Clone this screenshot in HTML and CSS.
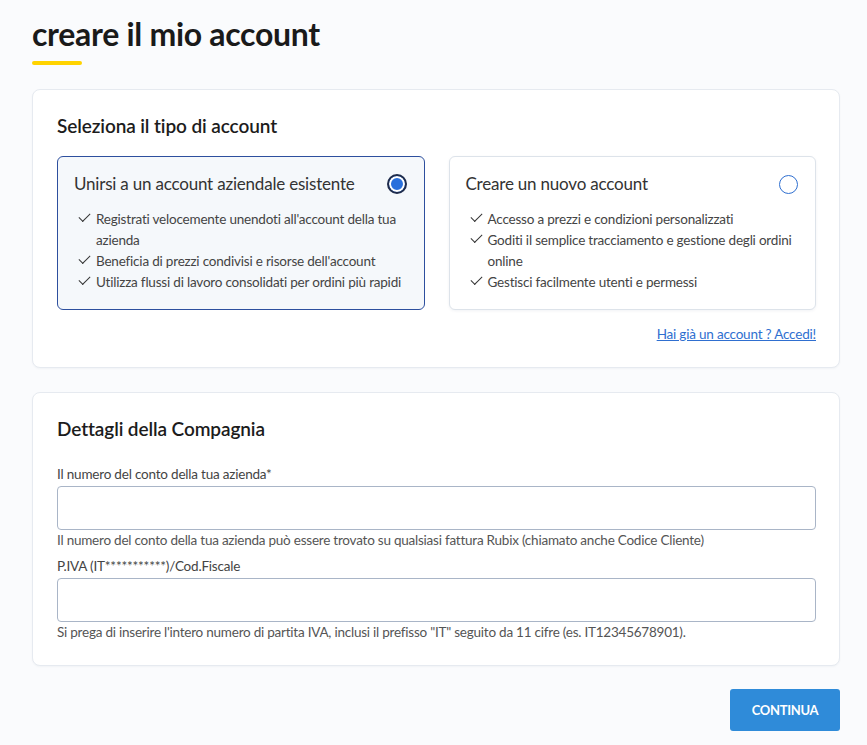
FILE: index.html
```html
<!DOCTYPE html>
<html>
<head>
    <title>Creare il mio account</title>
    <link rel="stylesheet" href="styles.css">
</head>
<body>
    <div class="page">
        <h1 class="page-title">creare il mio account</h1>
        <div class="title-bar"></div>

        <section class="card">
            <h2 class="card-title">Seleziona il tipo di account</h2>
            <div class="options">
                <label class="option option-selected">
                    <div class="option-head">
                        <span class="option-title">Unirsi a un account aziendale esistente</span>
                        <span class="radio radio-on"></span>
                    </div>
                    <ul class="checks">
                        <li>Registrati velocemente unendoti all'account della tua azienda</li>
                        <li>Beneficia di prezzi condivisi e risorse dell'account</li>
                        <li>Utilizza flussi di lavoro consolidati per ordini più rapidi</li>
                    </ul>
                </label>
                <label class="option">
                    <div class="option-head">
                        <span class="option-title">Creare un nuovo account</span>
                        <span class="radio"></span>
                    </div>
                    <ul class="checks">
                        <li>Accesso a prezzi e condizioni personalizzati</li>
                        <li>Goditi il semplice tracciamento e gestione degli ordini online</li>
                        <li>Gestisci facilmente utenti e permessi</li>
                    </ul>
                </label>
            </div>
            <div class="login-row">
                <a href="#" class="login-link">Hai già un account ? Accedi!</a>
            </div>
        </section>

        <section class="card card-details">
            <h2 class="card-title">Dettagli della Compagnia</h2>
            <div class="field">
                <label for="accountNumber">Il numero del conto della tua azienda*</label>
                <input type="text" id="accountNumber" name="accountNumber">
                <p class="hint">Il numero del conto della tua azienda può essere trovato su qualsiasi fattura Rubix (chiamato anche Codice Cliente)</p>
            </div>
            <div class="field">
                <label for="vat">P.IVA (IT***********)/Cod.Fiscale</label>
                <input type="text" id="vat" name="vat">
                <p class="hint">Si prega di inserire l'intero numero di partita IVA, inclusi il prefisso "IT" seguito da 11 cifre (es. IT12345678901).</p>
            </div>
        </section>

        <div class="actions">
            <button type="button" class="btn-continue">CONTINUA</button>
        </div>
    </div>
</body>
</html>
```

FILE: styles.css
```css
body {
    margin: 0;
    padding: 0;
    background: #fafbfd;
    font-family: Lato, "Open Sans", sans-serif;
    color: #333;
}

.page {
    width: 808px;
    margin-left: 32px;
    padding-top: 14px;
}

.page-title {
    margin: 0;
    font-size: 32px;
    line-height: 40px;
    font-weight: 700;
    color: #1a1a1a;
    letter-spacing: -0.3px;
}

.title-bar {
    width: 50px;
    height: 4px;
    margin-top: 7px;
    background: #ffd300;
    border-radius: 2px;
}

.card {
    margin-top: 24px;
    background: #fff;
    border: 1px solid #e6eaf0;
    border-radius: 8px;
    padding: 22px 23px 23px 24px;
    box-shadow: 0 1px 2px rgba(20, 40, 80, 0.04);
}

.card-title {
    margin: 0;
    font-size: 19px;
    line-height: 28px;
    font-weight: 600;
    color: #1c1c1c;
    letter-spacing: -0.1px;
}

.options {
    display: grid;
    grid-template-columns: 1fr 1fr;
    gap: 24px;
    margin-top: 16px;
}

.option {
    display: block;
    border: 1px solid #dde3ea;
    border-radius: 6px;
    background: #fff;
    padding: 15px 16px 16px 16px;
    box-shadow: 0 1px 3px rgba(20, 40, 80, 0.06);
    cursor: pointer;
}

.option-selected {
    border-color: #2d4f9e;
    background: #f5f8fb;
    box-shadow: none;
}

.option-head {
    display: flex;
    justify-content: space-between;
    align-items: center;
    height: 24px;
}

.option-title {
    font-size: 17px;
    line-height: 24px;
    color: #333;
    letter-spacing: -0.2px;
}

.radio {
    width: 17px;
    height: 17px;
    border: 1.5px solid #2f6fd0;
    border-radius: 50%;
    margin-right: 1px;
    box-sizing: content-box;
}

.radio-on {
    border: 2px solid #1f2c4c;
    width: 16px;
    height: 16px;
    background: #2a70dc;
    box-shadow: inset 0 0 0 2px #fff;
}

.checks {
    list-style: none;
    margin: 13px 0 0 0;
    padding: 0;
}

.checks li {
    position: relative;
    padding-left: 22px;
    font-size: 13.5px;
    line-height: 21px;
    color: #444;
    letter-spacing: -0.2px;
}

.checks li::before {
    content: "";
    position: absolute;
    left: 5px;
    top: 4px;
    width: 10px;
    height: 5px;
    border-left: 1.4px solid #333;
    border-bottom: 1.4px solid #333;
    transform: rotate(-45deg);
}

.login-row {
    text-align: right;
    margin-top: 13px;
    line-height: 20px;
}

.login-link {
    font-size: 13.5px;
    color: #2f6fd0;
    text-decoration: underline;
    letter-spacing: -0.2px;
}

.card-details {
    margin-top: 24px;
}

.field label {
    display: block;
    font-size: 13.5px;
    line-height: 20px;
    color: #444;
    margin-bottom: 2px;
    letter-spacing: -0.2px;
}

.field:first-of-type {
    margin-top: 21px;
}

.field + .field {
    margin-top: 6px;
}

.field input {
    display: block;
    width: 100%;
    height: 44px;
    box-sizing: border-box;
    border: 1px solid #a9b5c7;
    border-radius: 4px;
    background: #fff;
    padding: 0 12px;
    font-family: inherit;
    font-size: 14px;
}

.hint {
    margin: 0;
    font-size: 13.5px;
    line-height: 20px;
    color: #555;
    letter-spacing: -0.23px;
}

.actions {
    display: flex;
    justify-content: flex-end;
    margin-top: 23px;
}

.btn-continue {
    width: 110px;
    height: 42px;
    background: #2f8bd9;
    color: #fff;
    border: none;
    border-radius: 3px;
    font-family: inherit;
    font-size: 13px;
    font-weight: 700;
    letter-spacing: -0.3px;
    cursor: pointer;
}
```
